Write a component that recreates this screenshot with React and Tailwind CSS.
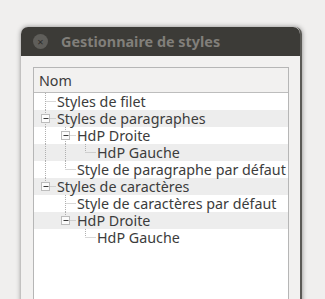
const rows = [
  { level: 0, label: 'Styles de filet', expander: false, next: true, anc: [] },
  { level: 0, label: 'Styles de paragraphes', expander: true, next: true, anc: [] },
  { level: 1, label: 'HdP Droite', expander: true, next: true, anc: [true] },
  { level: 2, label: 'HdP Gauche', expander: false, next: false, anc: [true, true] },
  { level: 1, label: 'Style de paragraphe par défaut', expander: false, next: false, anc: [true] },
  { level: 0, label: 'Styles de caractères', expander: true, next: false, anc: [] },
  { level: 1, label: 'Style de caractères par défaut', expander: false, next: true, anc: [false] },
  { level: 1, label: 'HdP Droite', expander: true, next: false, anc: [false] },
  { level: 2, label: 'HdP Gauche', expander: false, next: false, anc: [false, false] },
];

const dot = { stroke: '#b0b0b0', strokeWidth: 1, strokeDasharray: '1 1' };

const Guides = ({ row }) => {
  const w = 23 + row.level * 20;
  const cx = 11.5 + row.level * 20;
  return (
    <svg width={w} height="17" className="shrink-0">
      {row.anc.map((on, a) =>
        on ? <line key={a} x1={11.5 + a * 20} y1="0" x2={11.5 + a * 20} y2="17" style={dot} /> : null
      )}
      <line x1={cx} y1="0" x2={cx} y2={row.next ? 17 : 8.5} style={dot} />
      <line x1={cx + 1} y1="8.5" x2={cx + 10} y2="8.5" style={dot} />
      {row.expander && (
        <g>
          <rect x={cx - 4} y="4.5" width="8" height="8" fill="#fbfbfb" stroke="#bcbcbc" />
          <line x1={cx - 2} y1="8.5" x2={cx + 3} y2="8.5" stroke="#3a3a3a" />
        </g>
      )}
    </svg>
  );
};

export default function App() {
  return (
    <div
      className="h-[299px] w-[325px] overflow-hidden bg-[#f0efee] pt-[27px] pl-[21px]"
      style={{ fontFamily: '"Noto Sans", "Open Sans", sans-serif' }}
    >
      <div className="flex h-[290px] w-[281px] flex-col rounded-t-[7px] bg-[#f2f1f0] shadow-[0_0_5px_rgba(0,0,0,0.45)] border-r-2 border-[#5b5a56]">
        <div className="flex h-[29px] items-center gap-[13px] rounded-t-[7px] bg-[#3c3b37] pl-[12px]">
          <div className="flex h-[15px] w-[15px] items-center justify-center rounded-full bg-[#5f5e5a] text-[11px] leading-none text-[#2e2d2a]">
            ×
          </div>
          <span className="pt-[1px] text-[14.4px] font-bold leading-none text-[#817f7a]">Gestionnaire de styles</span>
        </div>
        <div className="flex-1 pt-[11px] pl-[12px] pr-[11px]">
          <div className="h-full border border-[#b6b6b6] bg-white">
            <div className="flex h-[25px] items-center border-b border-[#bdbdbd] bg-[#f2f1f0] pl-[5px] pt-[2px] text-[14.3px] leading-none text-[#3c3c3c]">
              Nom
            </div>
            {rows.map((row, i) => (
              <div
                key={i}
                className={`flex h-[17px] items-center text-[14.3px] text-[#3c3c3c] ${
                  i % 2 === 1 ? 'bg-[#ededed]' : 'bg-white'
                }`}
              >
                <Guides row={row} />
                <span className="whitespace-nowrap pt-[1px] leading-none">{row.label}</span>
              </div>
            ))}
          </div>
        </div>
      </div>
    </div>
  );
}
